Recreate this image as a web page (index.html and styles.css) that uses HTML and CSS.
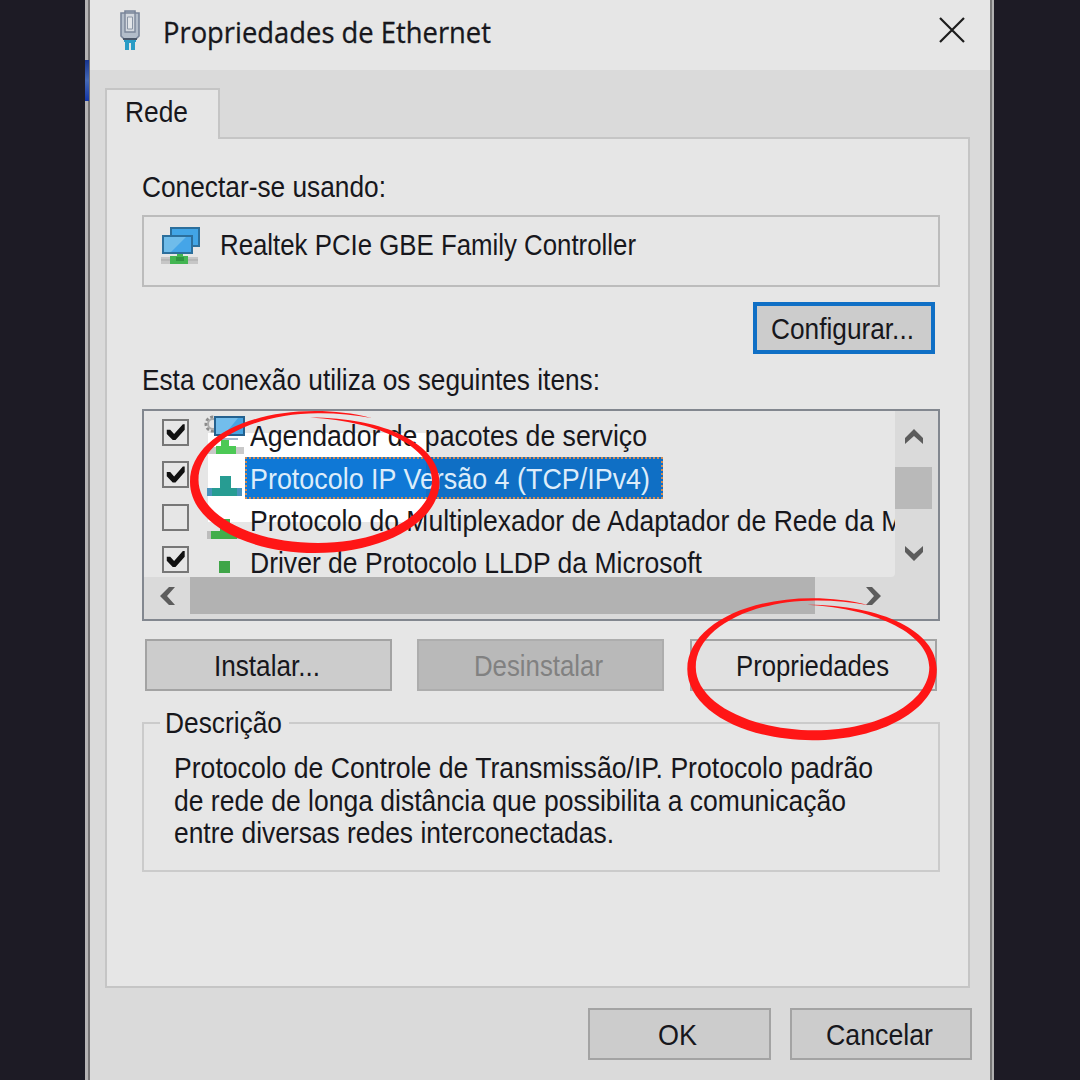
FILE: index.html
```html
<!DOCTYPE html>
<html lang="pt-BR">
<head>
<meta charset="utf-8">
<title>Propriedades de Ethernet</title>
<link rel="stylesheet" href="styles.css">
</head>
<body>
<main class="window">
  <i class="backdrop-chip"></i>
  <header class="titlebar">
    <svg class="plug" width="22" height="42" viewBox="0 0 22 42">
      <path d="M5 29h12v3h-1v8h-4v-7h-2v7H6v-8H5z" fill="#2a9cc5"/>
      <path d="M2 3h4V1h10v2h4v23l-3 3H5l-3-3z" fill="#b3bdca" stroke="#79859a" stroke-width="1.600"/>
      <path d="M6 3h10v19H6z" fill="#d3d8df" stroke="#7c879a" stroke-width="1.400"/>
      <path d="M8.500 7h5v12h-5z" fill="#e2e5e9" stroke="#8b96a6"/>
      <path d="M4 29h14" stroke="#4a5668" stroke-width="2"/>
    </svg>
    <h1 class="title"><span class="fit" data-width="328">Propriedades de Ethernet</span></h1>
    <svg class="close" width="28" height="28" viewBox="0 0 28 28"><path d="M2 2l24 24M26 2L2 26" stroke="#1c1c1c" stroke-width="2.200"/></svg>
  </header>

  <div class="tab"><span class="fit" data-width="63">Rede</span></div>
  <section class="panel">
    <p class="label"><span class="fit" data-width="244">Conectar-se usando:</span></p>
    <div class="adapter">
      <svg width="40" height="40" viewBox="0 0 40 40">
        <path d="M1 31h37v7H1z" fill="#c6c6c6"/><path d="M1 34h37" stroke="#a9a9a9"/>
        <path d="M17 27h6v3h5v8H10v-8h7z" fill="#43b552"/><path d="M16 31h8v4h-8z" fill="#2f9440"/>
        <path d="M11 2h28v18H11z" fill="#42a5e6" stroke="#2c6f9c" stroke-width="2"/>
        <path d="M3 10h29v17H3z" fill="#45a5e8" stroke="#2c6f9c" stroke-width="2"/>
        <path d="M4 11h22L11 26H4z" fill="#6fbcea"/>
      </svg>
      <span class="fit" data-width="416">Realtek PCIe GBE Family Controller</span>
    </div>
    <button class="btn configure"><span class="fit" data-width="143">Configurar...</span></button>
    <p class="label items-label"><span class="fit" data-width="458">Esta conexão utiliza os seguintes itens:</span></p>

    <div class="list">
      <div class="rows">
        <i class="glow"></i>
        <div class="row">
          <span class="check on"></span>
          <svg class="icon" width="42" height="42" viewBox="0 0 42 42">
            <path d="M3 32h37v7H3z" fill="#c9c9c9"/>
            <circle cx="9" cy="9" r="7" fill="none" stroke="#8c8c8c" stroke-width="3" stroke-dasharray="3 2"/>
            <circle cx="9" cy="9" r="5" fill="none" stroke="#aaa" stroke-width="2"/>
            <path d="M17 25h8v6h7v8H12v-8h5z" fill="#4cc955"/>
            <path d="M11 2h29v18H11z" fill="#48a5e2" stroke="#24618f" stroke-width="2"/><path d="M12 3h22L21 19h-9z" fill="#72bdec"/>
            <path d="M18 24h16" stroke="#a4b7cb" stroke-width="2"/>
          </svg>
          <span class="name"><span class="fit" data-width="397">Agendador de pacotes de serviço</span></span>
        </div>
        <div class="row">
          <span class="check on"></span>
          <svg class="icon" width="42" height="42" viewBox="0 0 42 42">
            <path d="M3 31h35v8H3z" fill="#4a93bd"/><path d="M16 19h11v12h6v8H8v-8h8z" fill="#279c92"/>
          </svg>
          <span class="name selected"><span class="fit" data-width="400">Protocolo IP Versão 4 (TCP/IPv4)</span></span>
        </div>
        <div class="row">
          <span class="check"></span>
          <svg class="icon" width="42" height="42" viewBox="0 0 42 42">
            <path d="M3 31h34v8H3z" fill="#bdbdbd"/><path d="M16 19h10v12h7v8H7v-8h9z" fill="#42ae4b"/>
          </svg>
          <span class="name"><span class="fit" data-width="739">Protocolo do Multiplexador de Adaptador de Rede da Microsoft</span></span>
        </div>
        <div class="row">
          <span class="check on"></span>
          <svg class="icon" width="42" height="42" viewBox="0 0 42 42"><path d="M15 19h11v12H15z" fill="#3fa548"/></svg>
          <span class="name"><span class="fit" data-width="452">Driver de Protocolo LLDP da Microsoft</span></span>
        </div>
      </div>
      <div class="vbar">
        <svg width="20" height="16" viewBox="0 0 20 16"><path d="M1 15V9l9-9 9 9v6l-9-8z" fill="#5c5c5c"/></svg>
        <i class="vthumb"></i>
        <svg class="down" width="20" height="16" viewBox="0 0 20 16"><path d="M1 1v6l9 9 9-9V1l-9 8z" fill="#5c5c5c"/></svg>
      </div>
      <div class="hbar">
        <svg width="16" height="20" viewBox="0 0 16 20"><path d="M15 1H9l-9 9 9 9h6l-8-9z" fill="#5c5c5c"/></svg>
        <i class="hthumb"></i>
        <svg class="right" width="16" height="20" viewBox="0 0 16 20"><path d="M1 1h6l9 9-9 9H1l8-9z" fill="#5c5c5c"/></svg>
      </div>
    </div>

    <div class="actions">
      <button class="btn"><span class="fit" data-width="106">Instalar...</span></button>
      <button class="btn disabled" disabled><span class="fit" data-width="129">Desinstalar</span></button>
      <button class="btn light"><span class="fit" data-width="153">Propriedades</span></button>
    </div>

    <fieldset class="description">
      <legend><span class="fit" data-width="117">Descrição</span></legend>
      <p><span class="fit" data-width="699">Protocolo de Controle de Transmissão/IP. Protocolo padrão</span></p>
      <p><span class="fit" data-width="672">de rede de longa distância que possibilita a comunicação</span></p>
      <p><span class="fit" data-width="440">entre diversas redes interconectadas.</span></p>
    </fieldset>
  </section>

  <footer class="footer">
    <button class="btn"><span class="fit" data-width="39">OK</span></button>
    <button class="btn"><span class="fit" data-width="107">Cancelar</span></button>
  </footer>
</main>

<svg class="marks" width="1080" height="1080" viewBox="0 0 1080 1080">
  <defs>
    <path id="ring" d="M371.500 418C353 413 334 411 315 411C246 411 190 440 190 482C190 522 246 553 315 553C384 553 439.500 522 439.500 482C439.500 444 385 417.500 310 417.500C382 421.500 432 448 432 480C432 515 382 543 318 543C252 543 198.500 515 198.500 480C198.500 442 252 413.500 318 413.200C336 413 354 415 371.500 418z"/>
  </defs>
  <g fill="#ff1616"><use href="#ring"/><use href="#ring" x="497.300" y="187.200"/></g>
</svg>
<script src="fit.js"></script>
</body>
</html>
```
FILE: styles.css
```css
* { box-sizing: border-box; }

body {
  margin: 0;
  height: 1080px;
  overflow: hidden;
  background: #1d1b25;
  color: #17171c;
  font: 30px/34px "Liberation Sans", Arial, sans-serif;
}

p, h1 { margin: 0; font-weight: 400; }
svg { display: block; flex: none; }

.fit {
  display: inline-block;
  white-space: nowrap;
  transform-origin: 0 50%;
}

.window {
  position: relative;
  width: 909px;
  height: 1080px;
  margin-left: 85px;
  padding: 0 4px 0 5px;
  background: linear-gradient(90deg, #b5b3b4 0 3px, #777576 3px 5px, #dadada 5px 905px, #777 905px 907px, #b0b0b0 907px);
}

.backdrop-chip {
  position: absolute;
  left: 0;
  top: 60px;
  width: 4px;
  height: 41px;
  background: linear-gradient(#16348f, #4468b4 50%, #1436a6);
}

.titlebar {
  display: flex;
  height: 70px;
  padding: 10px 24px 0 29px;
  background: #e6e6e6;
}

.title {
  margin-left: 22px;
  padding-top: 5px;
  font: 28.500px/34px "Open Sans", "Noto Sans", sans-serif;
  -webkit-text-stroke: 0.300px;
}

.close { margin: 6px 0 0 auto; }

.tab {
  position: relative;
  width: 115px;
  height: 51px;
  margin: 18px 0 0 15px;
  padding: 5px 0 0 18px;
  background: #e6e6e6;
  border: 2px solid #c5c5c5;
  border-bottom: 0;
}

.panel {
  width: 865px;
  height: 851px;
  margin: -2px 0 0 15px;
  padding: 31px 28px 0 35px;
  background: #e6e6e6;
  border: 2px solid #c5c5c5;
}

.label { height: 34px; }

.adapter {
  display: flex;
  width: 798px;
  height: 72px;
  margin-top: 11px;
  padding: 9px 0 0 16px;
  gap: 20px;
  border: 2px solid #bcbcbc;
}

.adapter .fit { padding-top: 2px; }

.btn {
  display: flex;
  align-items: center;
  justify-content: center;
  width: 247px;
  height: 52px;
  padding: 2px 3px 0 0;
  border: 2px solid #a3a3a3;
  background: #ccc;
  color: inherit;
  font: inherit;
}

.btn.configure {
  width: 182px;
  margin: 15px 0 0 611px;
  border: 4px solid #0f6fc5;
}

.btn.light { margin-left: 2px; background: #e1e1e1; }
.btn.disabled { background: #b9b9b9; border-color: #adadad; color: #818181; }

.items-label { margin-top: 9px; }

.list {
  display: grid;
  grid-template: 166px 37px / 751px 37px;
  width: 798px;
  height: 212px;
  margin-top: 12px;
  background: #dadada;
  border: 2px solid #82878f;
}

.rows {
  position: relative;
  overflow: hidden;
  padding-top: 2px;
  background: #e6e6e6;
  border-bottom-right-radius: 4px;
}

.glow {
  position: absolute;
  left: 64px;
  top: 22px;
  width: 218px;
  height: 89px;
  background: #fff;
}

.row {
  position: relative;
  display: flex;
  height: 42.300px;
  padding-left: 18px;
}

.check {
  flex: none;
  width: 27px;
  height: 27px;
  margin-top: 6px;
  border: 2px solid #777;
}

.check.on::after {
  content: "";
  display: block;
  height: 100%;
  background: #111;
  clip-path: polygon(12% 38%, 27% 38%, 44% 57%, 82% 14%, 90% 14%, 90% 38%, 50% 83%, 38% 83%, 12% 56%);
}

.icon { margin: 2px 0 0 15px; }

.name {
  height: 42px;
  padding: 6px 0 0 4px;
  white-space: nowrap;
}

.name.selected {
  width: 418px;
  margin: 2px 0 0 -1px;
  padding: 3px 0 0 3px;
  border: 2px dotted #d08a52;
  background: linear-gradient(90deg, #0f78d6 181px, #0f6fc5 181px);
  background-origin: border-box;
  color: #dcecfa;
}

.vbar {
  display: flex;
  flex-direction: column;
  align-items: center;
  padding-top: 18px;
}

.vthumb { width: 37px; height: 42px; margin-top: 22px; background: #b9b9b9; }
.down { margin-top: 36px; }

.hbar { display: flex; align-items: center; padding-left: 16px; }
.hthumb { flex: none; width: 625px; height: 37px; margin-left: 14px; background: #b2b2b2; }
.right { margin-left: 50px; }

.actions {
  display: flex;
  gap: 24.500px;
  margin: 18px 0 0 3px;
}

.description {
  width: 798px;
  height: 166px;
  margin: 15px 0 0;
  padding: 11px 0 0 30px;
  border: 2px solid #cbcbcb;
}

.description legend {
  height: 34px;
  margin-left: -14px;
  padding: 0 7px 0 5px;
}

.description p { height: 32.700px; }

.footer {
  display: flex;
  justify-content: flex-end;
  gap: 19px;
  padding: 20px 18px 0 0;
}

.footer .btn { width: 182.500px; }

.marks {
  position: absolute;
  left: 0;
  top: 0;
  pointer-events: none;
}
```
FILE: fit.js
```js
// Condense every label to the pixel width given in its data-width.
document.querySelectorAll(".fit").forEach((label) => {
  const natural = label.getBoundingClientRect().width;
  const wanted = Number(label.dataset.width);
  label.style.transform = `scaleX(${wanted / natural})`;
  label.style.marginRight = `${wanted - natural}px`;
});
```
